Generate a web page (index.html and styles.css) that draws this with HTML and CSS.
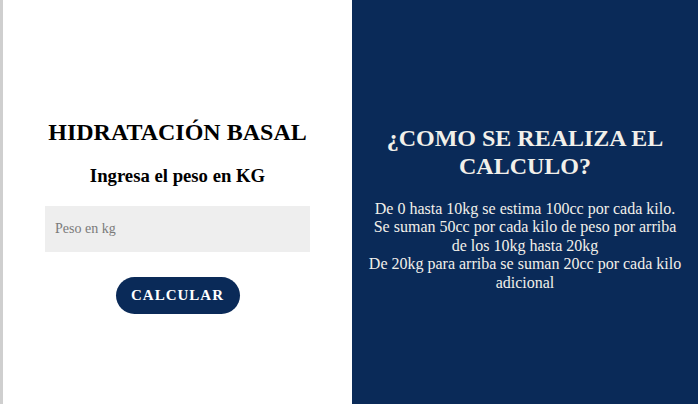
FILE: index.html
```html
<!DOCTYPE html>
<html lang="es">
<head>
<meta charset="utf-8">
<link rel="stylesheet" href="styles.css">
</head>
<body>
<main class="layout">
  <section class="panel panel-form">
    <h2 class="title">HIDRATACIÓN BASAL</h2>
    <h3 class="subtitle">Ingresa el peso en KG</h3>
    <input class="weight" type="text" placeholder="Peso en kg">
    <button class="btn" type="button">CALCULAR</button>
  </section>
  <section class="panel panel-info">
    <h2 class="info-title">¿COMO SE REALIZA EL CALCULO?</h2>
    <p class="info-text">De 0 hasta 10kg se estima 100cc por cada kilo.<br>Se suman 50cc por cada kilo de peso por arriba de los 10kg hasta 20kg<br>De 20kg para arriba se suman 20cc por cada kilo adicional</p>
  </section>
</main>
</body>
</html>
```
FILE: styles.css
```css
html, body {
  margin: 0;
  padding: 0;
  height: 100%;
}
body {
  font-family: "Liberation Serif", "Times New Roman", serif;
  background: #fff;
}
.layout {
  display: grid;
  grid-template-columns: 352px 1fr;
  height: 404px;
}
.panel {
  display: flex;
  flex-direction: column;
  align-items: center;
  justify-content: flex-start;
  text-align: center;
  box-sizing: border-box;
}
.panel-form {
  border-left: 3px solid #cfcfcf;
  background: #fff;
  color: #000;
  padding-top: 118px;
}
.title {
  font-size: 24px;
  line-height: 28px;
  margin: 0 0 19px;
}
.subtitle {
  font-size: 18.72px;
  line-height: 22px;
  margin: 0 0 19px;
}
.weight {
  box-sizing: border-box;
  width: 265px;
  height: 46px;
  border: 0;
  background: #eeeeee;
  padding: 0 10px;
  font-family: "Liberation Serif", serif;
  font-size: 14px;
  margin: 0 0 25px;
  outline: none;
}
.weight::placeholder {
  color: #7a7a7a;
}
.btn {
  background: #0a2a58;
  color: #fff;
  border: 0;
  border-radius: 20px;
  width: 124px;
  height: 37px;
  font-family: "Liberation Serif", serif;
  font-weight: bold;
  font-size: 15px;
  letter-spacing: 1px;
}
.panel-info {
  background: #0a2a58;
  color: #f2f0ea;
  padding: 124px 15px 0;
}
.info-title {
  font-size: 24px;
  margin: 0 0 20px;
  line-height: 28px;
}
.info-text {
  font-size: 16px;
  line-height: 18.4px;
  margin: 0;
}
```
